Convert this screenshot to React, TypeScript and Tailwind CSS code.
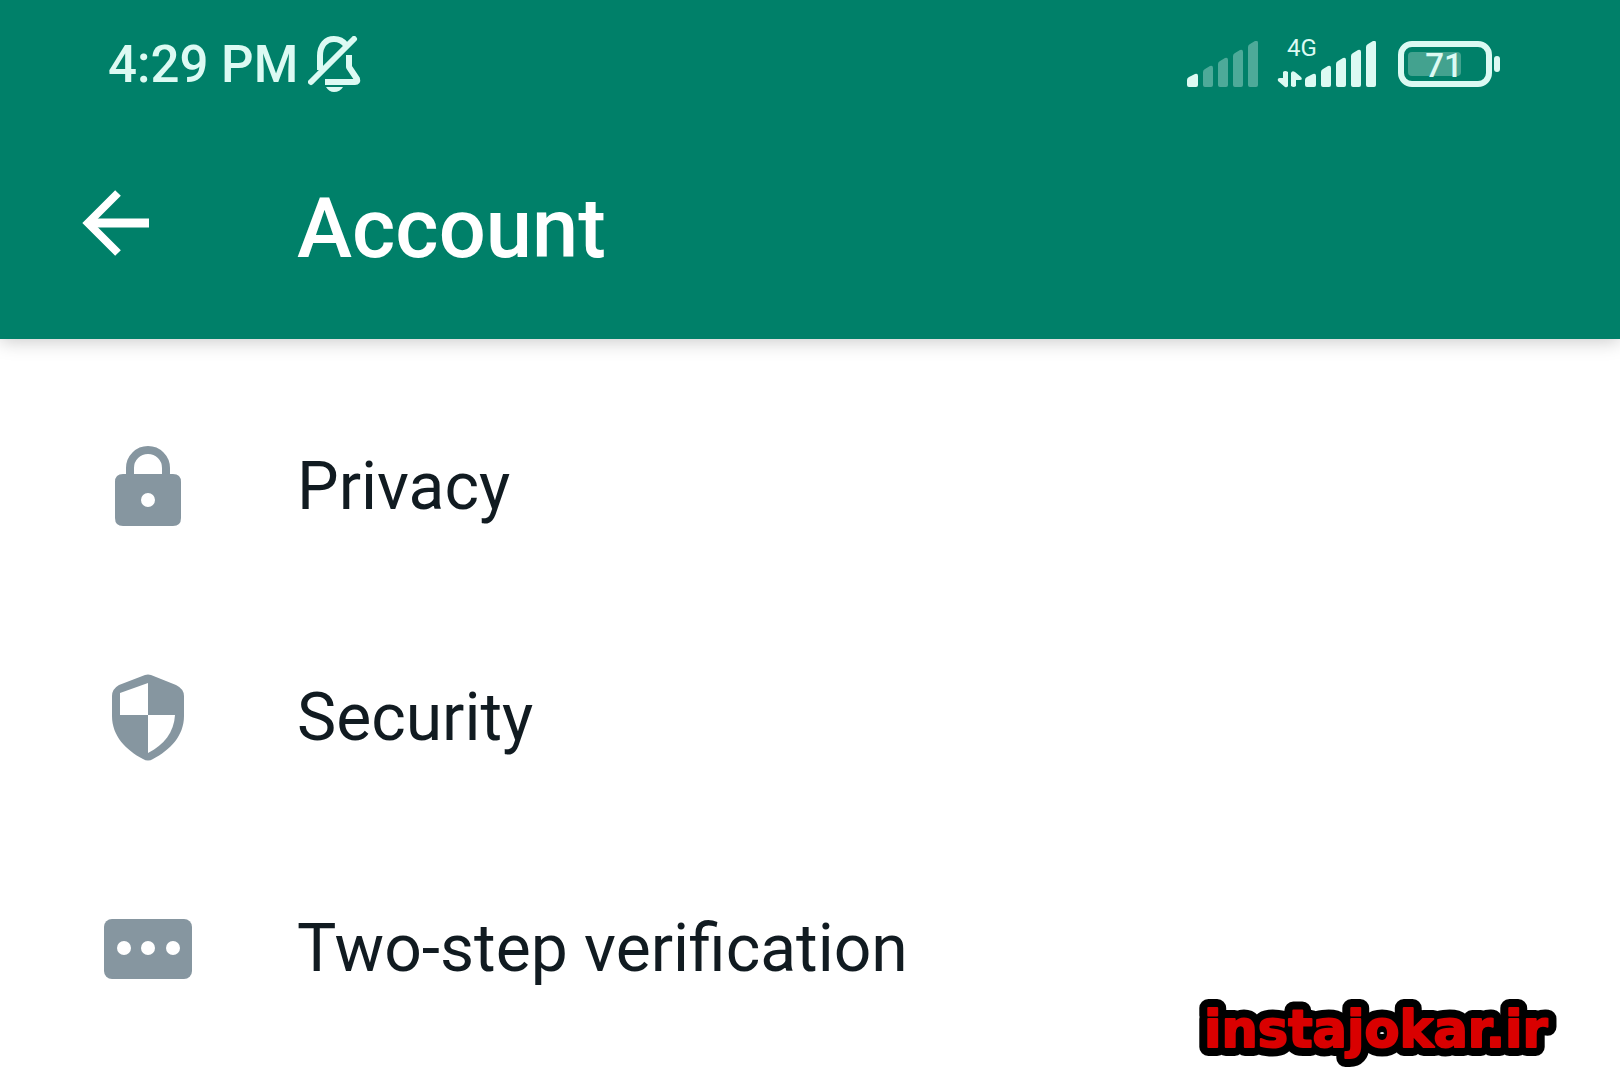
import type { ReactNode } from 'react'
import { clsx } from 'clsx'

interface SettingsItem {
  label: string
  icon: ReactNode
}

const BARS = [
  'M2 46V39Q2 37 4 36L10 33Q13 32 13 35V44Q13 46 11 46H4Q2 46 2 44Z',
  'M18 44V31Q18 29 20 28L25 25Q28 24 28 27V44Q28 46 26 46H20Q18 46 18 44Z',
  'M33 44V23Q33 21 35 20L40 17Q43 16 43 19V44Q43 46 41 46H35Q33 46 33 44Z',
  'M48 44V15Q48 13 50 12L55 9Q58 8 58 11V44Q58 46 56 46H50Q48 46 48 44Z',
  'M63 44V6Q63 4 65 3L70 0Q73 -1 73 2V44Q73 46 71 46H65Q63 46 63 44Z',
]

function SignalBars({ level, className }: { level: number; className?: string }) {
  return (
    <svg viewBox="0 0 74 46" className={clsx('h-[46px] w-[74px]', className)} fill="currentColor" aria-hidden="true">
      {BARS.map((d, i) => (
        <path key={i} d={d} opacity={i < level ? 1 : 0.35} />
      ))}
    </svg>
  )
}

function BellOff() {
  return (
    <svg viewBox="0 0 54 58" className="h-[58px] w-[54px]" fill="none" stroke="currentColor" aria-hidden="true">
      <path d="M12 34V20C12 9 18 3 26 3C31 3 35 5 38 9" strokeWidth="6" />
      <path d="M41 19V31L49 43Q50 46 47 46H17" strokeWidth="6" strokeLinejoin="round" />
      <path d="M3 46L46 3" strokeWidth="6" strokeLinecap="round" />
      <path d="M18 51H35Q32 56 26 56Q21 56 18 51Z" fill="currentColor" stroke="none" />
    </svg>
  )
}

function DataArrows() {
  return (
    <svg viewBox="0 0 26 19" className="h-[19px] w-[26px]" fill="currentColor" aria-hidden="true">
      <path d="M6 2Q8 0 11 2V16Q10 18 8 17L1 11Q0 8 3 8H6Z" />
      <path d="M14 3Q15 0 18 2L24 7Q26 10 23 10H19V16Q17 18 14 16Z" />
    </svg>
  )
}

function Battery({ percent }: { percent: number }) {
  return (
    <svg viewBox="0 0 104 48" className="h-[48px] w-[104px]" role="img" aria-label={`Battery ${percent}%`}>
      <rect x="11" y="12" width={Math.round(percent * 0.74)} height="24" rx="4" fill="#43a28f" />
      <rect x="4" y="4" width="88" height="40" rx="11" fill="none" stroke="currentColor" strokeWidth="6" />
      <rect x="97" y="16" width="6" height="16" rx="3" fill="currentColor" />
      <text x="47" y="37" textAnchor="middle" fill="currentColor" className="text-[33px] font-medium">
        {percent}
      </text>
    </svg>
  )
}

function LockIcon() {
  return (
    <svg viewBox="0 0 100 100" className="size-[100px] shrink-0" fill="none" aria-hidden="true">
      <path d="M33 42V31a18 18 0 0 1 36 0V42" stroke="#8696a0" strokeWidth="8" />
      <path
        fillRule="evenodd"
        d="M26 37H76Q84 37 84 45V81Q84 89 76 89H26Q18 89 18 81V45Q18 37 26 37ZM51 56a7 7 0 1 0 0 14a7 7 0 1 0 0-14Z"
        fill="#8696a0"
      />
    </svg>
  )
}

function ShieldIcon() {
  return (
    <svg viewBox="0 0 100 100" className="size-[100px] shrink-0" aria-hidden="true">
      <path
        d="M48 7Q51 6 54 7L79 17Q87 21 87 28V48C87 68 73 82 56 91Q51 94 46 91C29 82 15 68 15 48V28Q15 21 22 17Z"
        fill="#8696a0"
      />
      <path d="M51 15V47H23V25Z" fill="#fff" />
      <path d="M51 47H78C77 64 67 77 51 85Z" fill="#fff" />
    </svg>
  )
}

function PinIcon() {
  return (
    <svg viewBox="0 0 100 100" className="size-[100px] shrink-0" aria-hidden="true">
      <rect x="7" y="20" width="88" height="60" rx="8" fill="#8696a0" />
      <circle cx="27" cy="49" r="7" fill="#fff" />
      <circle cx="51" cy="49" r="7" fill="#fff" />
      <circle cx="76" cy="49" r="7" fill="#fff" />
    </svg>
  )
}

const ITEMS: SettingsItem[] = [
  { label: 'Privacy', icon: <LockIcon /> },
  { label: 'Security', icon: <ShieldIcon /> },
  { label: 'Two-step verification', icon: <PinIcon /> },
]

function StatusBar() {
  return (
    <div className="flex items-center justify-between pl-[108px] pr-[119px] text-[#dcfaf3]">
      <div className="flex items-center gap-[10px]">
        <span className="text-[51px] leading-[60px] font-medium">4:29 PM</span>
        <BellOff />
      </div>
      <div className="flex items-center pb-[2px]">
        <SignalBars level={1} />
        <div className="ml-[18px] flex w-[26px] flex-col items-start gap-[10px] pb-1">
          <span className="pl-[10px] text-[24px] leading-[24px] whitespace-nowrap">4G</span>
          <DataArrows />
        </div>
        <SignalBars level={5} />
        <div className="ml-5">
          <Battery percent={71} />
        </div>
      </div>
    </div>
  )
}

function Watermark() {
  return (
    <svg
      viewBox="0 0 372 70"
      className="absolute right-[56px] bottom-[12px] h-[70px] w-[372px] font-['DejaVu_Sans',sans-serif] text-[51px] font-bold"
      strokeLinejoin="round"
    >
      {/* black outline behind the red lettering */}
      <use href="#watermark" fill="#000" stroke="#000" strokeWidth="18" />
      <g fill="#d90000" stroke="#d90000" strokeWidth="2">
        <text id="watermark" x="12" y="49">
          instajokar.ir
        </text>
      </g>
    </svg>
  )
}

export default function App() {
  return (
    <div className="relative min-h-screen overflow-hidden bg-white font-['Roboto',sans-serif]">
      <header className="bg-[#008069] pt-[35px] pb-[62px] shadow-[0_2px_18px_rgba(0,0,0,0.22)]">
        <StatusBar />

        {/* Toolbar */}
        <div className="mt-[86px] flex items-center pl-[82px] text-white">
          <button type="button" aria-label="Back" className="mr-[147px]">
            <svg viewBox="0 0 68 96" className="h-[96px] w-[68px]" fill="none" stroke="currentColor" strokeWidth="8" aria-hidden="true">
              <path d="M36 12L6 42L36 72" />
              <path d="M7 42H67" strokeWidth="9" />
            </svg>
          </button>
          <h1 className="text-[83px] leading-[96px] font-medium">Account</h1>
        </div>
      </header>

      {/* Settings list */}
      <main className="pt-8">
        <ul>
          {ITEMS.map(({ label, icon }) => (
            <li key={label}>
              <button type="button" className="flex h-[231px] w-full items-center gap-[100px] pl-[97px] text-left">
                {icon}
                <span className="text-[66px] leading-[76px] text-[#111b21]">{label}</span>
              </button>
            </li>
          ))}
        </ul>
      </main>

      <Watermark />
    </div>
  )
}
